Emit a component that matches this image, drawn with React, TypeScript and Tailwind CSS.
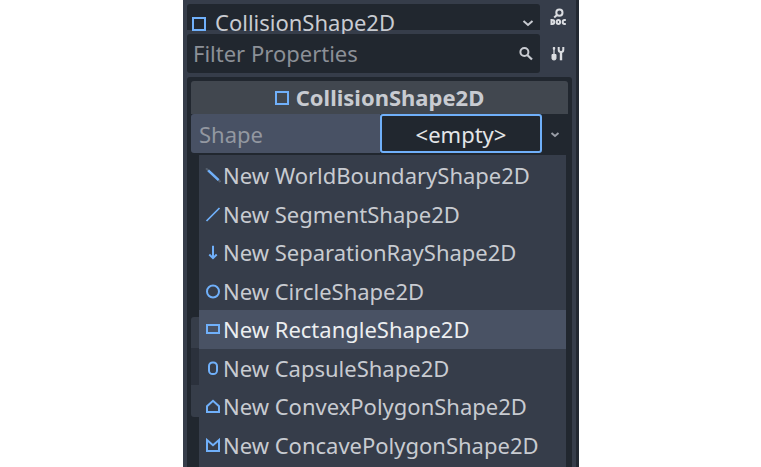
import React from "react";

type IconProps = { children: React.ReactNode };

function Glyph({ children }: IconProps) {
  return (
    <svg viewBox="0 0 16 16" className="mt-0.5 h-4 w-4 shrink-0 fill-none stroke-[#70b0fa] stroke-2">
      {children}
    </svg>
  );
}

const items: { label: string; icon: React.ReactNode; active?: boolean }[] = [
  {
    label: "New WorldBoundaryShape2D",
    icon: (
      <>
        <path d="M1 .3 15.4 13.9" className="stroke-[#565f6d]" strokeWidth="2" />
        <path d="M3.2 2.4 13.6 12.2" strokeWidth="2.5" />
      </>
    ),
  },
  { label: "New SegmentShape2D", icon: <path d="M1.5 14 14.5 1" strokeWidth="1.7" /> },
  { label: "New SeparationRayShape2D", icon: <path d="M8 .8V13.5M4.3 9.5 8 13.2 11.7 9.5" /> },
  { label: "New CircleShape2D", icon: <circle cx="8" cy="7.5" r="6" /> },
  { label: "New RectangleShape2D", icon: <rect x="2" y="3" width="12" height="8" />, active: true },
  { label: "New CapsuleShape2D", icon: <rect x="4" y="1.5" width="8" height="11.5" rx="3.6" /> },
  { label: "New ConvexPolygonShape2D", icon: <path d="M2 13V7.3L8 1.8l6 5.5V13Z" /> },
  { label: "New ConcavePolygonShape2D", icon: <path d="M2 13V2l6 5.2L14 2v11Z" /> },
];

function SquareIcon() {
  return (
    <svg viewBox="0 0 14 14" className="h-3.5 w-3.5 shrink-0 fill-none stroke-[#70b0fa] stroke-2">
      <rect x="1" y="1" width="12" height="12" />
    </svg>
  );
}

function DocIcon() {
  return (
    <svg viewBox="0 0 16 18" className="h-[18px] w-4 fill-none stroke-[#dcdee2]">
      <circle cx="9.4" cy="4.7" r="3.1" strokeWidth="2" />
      <path d="M7 7 4.2 9.6" strokeWidth="2" />
      <path
        d="M1.5 11v6M1.5 12h.9q1.9 0 1.9 2t-1.9 2h-.9M15.8 12h-1.2q-1.9 0-1.9 2t1.9 2h1.2"
        strokeWidth="2"
      />
      <ellipse cx="8.4" cy="14" rx="1.7" ry="2" strokeWidth="2" />
    </svg>
  );
}

function ToolsIcon() {
  return (
    <svg viewBox="0 0 14 16" className="h-4 w-3.5 fill-none stroke-[#dcdee2]">
      <path d="M3 1v8" strokeWidth="1.3" />
      <path d="M2.3 1.5h1.4v1.7H2.3ZM1 8.5h4v4q0 1.5-2 1.5t-2-1.5Z" className="fill-[#dcdee2]" strokeWidth="1" />
      <path d="M10 6v8.3" strokeWidth="2.4" />
      <path d="M7.7 1v2.7q0 2.3 2.3 2.3t2.3-2.3V1" strokeWidth="2" />
    </svg>
  );
}

export default function App() {
  return (
    <div className="flex h-[467px] w-[761px] justify-start overflow-hidden bg-white pl-[183px] font-['Noto_Sans','Open_Sans',sans-serif] text-[22px] leading-none text-[#c8cbd1]">
      <main className="flex h-full w-[396px] flex-col border-r-[3px] border-[#222831] bg-[#363d4a] pl-1">
        <div className="mt-1 flex h-[26px] shrink-0">
          <div className="flex w-[353px] items-start rounded-t-[3px] bg-[#21272f] pr-1.5 pl-[5px]">
            <span className="mt-[13px]">
              <SquareIcon />
            </span>
            <span className="mt-[7px] ml-[9px] flex-1 whitespace-nowrap">CollisionShape2D</span>
            <svg viewBox="0 0 12 8" className="mt-[15px] h-2 w-3 fill-none stroke-[#c8cbd1] stroke-2">
              <path d="m1.5 2 4.5 4 4.5-4" />
            </svg>
          </div>
          <div className="ml-[10px] pt-1">
            <DocIcon />
          </div>
        </div>
        <div className="relative mt-1 flex h-[39px] shrink-0 items-center">
          <div className="flex h-full w-[353px] items-center rounded-[3px] bg-[#21272f] pr-[7px] pl-[6px] text-[#8c9097]">
            <span className="flex-1 pb-px">Filter Properties</span>
            <svg viewBox="0 0 14 14" className="h-3.5 w-3.5 fill-none stroke-[#c8cbd1] stroke-2">
              <circle cx="5.4" cy="5" r="4" />
              <path d="m8.3 8 4.7 4.5" strokeWidth="2.3" />
            </svg>
          </div>
          <div className="ml-[11px]">
            <ToolsIcon />
          </div>
        </div>
        <section className="relative mt-1 flex w-[385px] flex-1 flex-col rounded-t-[3px] bg-[#21272f] px-1 pt-1">
          <h2 className="flex h-[33px] shrink-0 items-center justify-center gap-[7px] rounded-t-[3px] bg-[#41474f] font-bold">
            <SquareIcon />
            <span className="pb-0.5">CollisionShape2D</span>
          </h2>
          <div className="flex h-[39px] shrink-0">
            <div className="flex w-[189px] items-center rounded-l-[3px] bg-[#485164] pl-2 text-[#9398a1]">Shape</div>
            <div className="flex w-[162px] items-center justify-center rounded-[3px] border-2 border-[#70b0fa] text-[#e3e5e8]">
              &lt;empty&gt;
            </div>
            <div className="flex flex-1 items-center justify-center pt-0.5">
              <svg viewBox="0 0 10 8" className="h-2 w-2.5 fill-none stroke-[#9a9ea7] stroke-[1.9]">
                <path d="m1.5 2 3.5 3L8.5 2" />
              </svg>
            </div>
          </div>
          <div className="mt-[164px] flex w-4 shrink-0 flex-col">
            <div className="h-[31px] rounded-tl-[3px] bg-[#363d49]" />
            <div className="h-[37px] bg-[#2b313c]" />
            <div className="h-8 rounded-bl-[3px] bg-[#363d49]" />
          </div>
          <ul className="absolute top-[78px] bottom-0 left-3 w-[367px] bg-[#363d4a] pt-px">
            {items.map((item) => (
              <li
                key={item.label}
                className={`flex h-[38.5px] items-center whitespace-nowrap pl-1.5 ${
                  item.active ? "bg-[#495264] text-[#eceef0]" : ""
                }`}
              >
                <Glyph>{item.icon}</Glyph>
                <span className="ml-0.5">{item.label}</span>
              </li>
            ))}
          </ul>
        </section>
      </main>
    </div>
  );
}
